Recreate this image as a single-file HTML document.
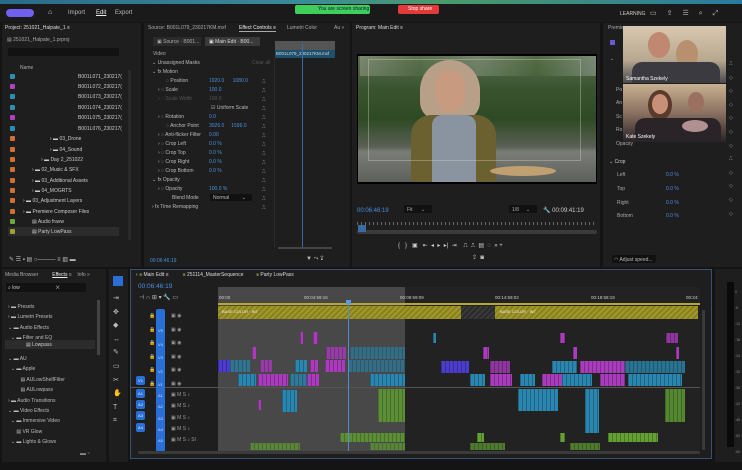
<!DOCTYPE html>
<html><head><meta charset="utf-8"><style>
*{margin:0;padding:0;box-sizing:border-box}
body{width:742px;height:470px;overflow:hidden;background:#141414;font-family:"Liberation Sans",sans-serif;font-size:5px;color:#aaa;position:relative}
.a{position:absolute}
.p{position:absolute;background:#1e1e1e}
.t{position:absolute;white-space:nowrap}
.blue{color:#4a8fe0}
.c{position:absolute;background-image:repeating-linear-gradient(90deg,rgba(0,0,0,.25) 0 1px,transparent 1px 4px)}
.v{background-color:#2a86ae}.m{background-color:#a83cba}.g{background-color:#62a034}.pu{background-color:#4c3ccc}
.hd{position:absolute;width:9px;height:9px;background:#2a6ed8;border-radius:2px;color:#cfe;font-size:4px;text-align:center;line-height:9px}
.sq{position:absolute;width:5px;height:5px;border-radius:1px}
</style></head><body>
<div class="a" style="left:0;top:0;width:742px;height:4px;background:linear-gradient(90deg,#2a6a8a,#3a8a9a 40%,#4a9a6a 60%,#2a7aa0)"></div>
<div class="a" style="left:0;top:4px;width:742px;height:18px;background:#1a1a1a"></div>
<div class="a" style="left:6px;top:9px;width:28px;height:8px;border-radius:4px;background:#7060f0"></div>
<div class="t" style="left:48px;top:9px;font-size:7px;color:#ddd">⌂</div>
<div class="t" style="left:68px;top:10px;font-size:6px;color:#bbb">Import</div>
<div class="t" style="left:96px;top:10px;font-size:6px;color:#eee;text-decoration:underline">Edit</div>
<div class="t" style="left:115px;top:10px;font-size:6px;color:#bbb">Export</div>
<div class="a" style="left:295px;top:5px;width:75px;height:9px;background:#3ecf5a;border-radius:2px"></div>
<div class="t" style="left:318px;top:6px;font-size:5px;color:#114">You are screen sharing</div>
<div class="a" style="left:398px;top:5px;width:41px;height:9px;background:#e03a3a;border-radius:2px"></div>
<div class="t" style="left:408px;top:6px;font-size:5px;color:#fff">Stop share</div>
<div class="t" style="left:620px;top:11px;font-size:5px;color:#ccc">LEARNING</div>
<div class="t" style="left:650px;top:9px;font-size:7px;color:#bbb;letter-spacing:10px">▭⇪☰⌕⤢</div>

<!-- project panel -->
<div class="p" style="left:2px;top:23px;width:139px;height:244px"></div>
<div class="t" style="left:5px;top:25px;color:#ddd">Project: 251021_Halpate_1 ≡</div>
<div class="t" style="left:7px;top:37px">▤ 251021_Halpate_1.prproj</div>
<div class="a" style="left:8px;top:48px;width:111px;height:8px;background:#121212"></div>
<div class="t" style="left:20px;top:65px">Name</div>
<div class="a" style="left:128px;top:70px;width:3px;height:170px;background:#2a2a2a"></div>
<div class="sq" style="left:10px;top:74px;background:#2a8fb0"></div><div class="t" style="left:78px;top:74px;color:#ccc">B001L071_230217(</div>
<div class="sq" style="left:10px;top:84px;background:#b040c0"></div><div class="t" style="left:78px;top:84px;color:#ccc">B001L072_230217(</div>
<div class="sq" style="left:10px;top:94px;background:#2a8fb0"></div><div class="t" style="left:78px;top:94px;color:#ccc">B001L073_230217(</div>
<div class="sq" style="left:10px;top:105px;background:#2a8fb0"></div><div class="t" style="left:78px;top:105px;color:#ccc">B001L074_230217(</div>
<div class="sq" style="left:10px;top:115px;background:#b040c0"></div><div class="t" style="left:78px;top:115px;color:#ccc">B001L075_230217(</div>
<div class="sq" style="left:10px;top:126px;background:#2a8fb0"></div><div class="t" style="left:78px;top:126px;color:#ccc">B001L076_230217(</div>
<div class="sq" style="left:10px;top:136px;background:#d07030"></div><div class="t" style="left:50px;top:136px;color:#ccc">› ▬ 03_Drone</div>
<div class="sq" style="left:10px;top:147px;background:#d07030"></div><div class="t" style="left:50px;top:147px;color:#ccc">› ▬ 04_Sound</div>
<div class="sq" style="left:10px;top:157px;background:#d07030"></div><div class="t" style="left:41px;top:157px;color:#ccc">› ▬ Day 2_251022</div>
<div class="sq" style="left:10px;top:167px;background:#d07030"></div><div class="t" style="left:32px;top:167px;color:#ccc">› ▬ 02_Music &amp; SFX</div>
<div class="sq" style="left:10px;top:178px;background:#d07030"></div><div class="t" style="left:32px;top:178px;color:#ccc">› ▬ 03_Additional Assets</div>
<div class="sq" style="left:10px;top:188px;background:#d07030"></div><div class="t" style="left:32px;top:188px;color:#ccc">› ▬ 04_MOGRTS</div>
<div class="sq" style="left:10px;top:198px;background:#d07030"></div><div class="t" style="left:23px;top:198px;color:#ccc">› ▬ 03_Adjustment Layers</div>
<div class="sq" style="left:10px;top:209px;background:#d07030"></div><div class="t" style="left:23px;top:209px;color:#ccc">› ▬ Premiere Composer Files</div>
<div class="sq" style="left:10px;top:219px;background:#6aa83a"></div><div class="t" style="left:32px;top:219px;color:#ccc">▤ Audio fravw</div>
<div class="a" style="left:8px;top:227px;width:111px;height:9px;background:#2c2c2c"></div>
<div class="sq" style="left:10px;top:229px;background:#a0a030"></div><div class="t" style="left:32px;top:229px;color:#ccc">▤ Party LowPass</div>
<div class="t" style="left:9px;top:256px;color:#bbb;font-size:6px">✎ ☰ ▪ ▤ ○——— ≡ ▥ ▬</div>

<!-- effect controls -->
<div class="p" style="left:144px;top:23px;width:206px;height:244px"></div>
<div class="t" style="left:148px;top:25px">Source: B001L079_230217KM.mxf</div>
<div class="t" style="left:239px;top:25px;color:#eee;border-bottom:1px solid #aaa">Effect Controls ≡</div>
<div class="t" style="left:287px;top:25px">Lumetri Color</div>
<div class="t" style="left:334px;top:25px">Au »</div>
<div class="a" style="left:153px;top:37px;width:48px;height:9px;background:#2a2a2a"></div><div class="t" style="left:157px;top:39px">▣ Source · B001...</div>
<div class="a" style="left:205px;top:37px;width:55px;height:9px;background:#3a3a3a"></div><div class="t" style="left:209px;top:39px;color:#ddd">▣ Main Edit · B00...</div>
<div class="a" style="left:275px;top:41px;width:60px;height:17px;background:#555"></div>
<div class="a" style="left:275px;top:50px;width:60px;height:8px;background:#1f4f6a"></div>
<div class="t" style="left:276px;top:51px;color:#cde;font-size:4.5px">B001L079_230217KM.mxf</div>
<div class="a" style="left:302px;top:44px;width:1px;height:205px;background:#3a6aa0"></div>
<div class="a" style="left:274px;top:58px;width:1px;height:190px;background:#2a2a2a"></div>
<div class="t" style="left:153px;top:51px">Video</div>
<div class="t" style="left:152px;top:60px;color:#bbb">⌄ Unassigned Masks</div><div class="t" style="left:252px;top:60px;color:#555">Clear all</div>
<div class="t" style="left:152px;top:69px;color:#bbb">⌄ fx Motion</div>
<div class="t" style="left:166px;top:78px;color:#bbb">◌ Position</div><div class="t blue" style="left:209px;top:78px">1920.0 &nbsp;&nbsp;&nbsp;&nbsp; 1080.0</div>
<div class="t" style="left:158px;top:87px;color:#bbb">› ◌ Scale</div><div class="t blue" style="left:209px;top:87px">100.0</div>
<div class="t" style="left:158px;top:96px;color:#555">› ◌ Scale Width</div><div class="t" style="left:209px;top:96px;color:#555">100.0</div>
<div class="t" style="left:211px;top:105px;color:#bbb">☑ Uniform Scale</div>
<div class="t" style="left:158px;top:114px;color:#bbb">› ◌ Rotation</div><div class="t blue" style="left:209px;top:114px">0.0</div>
<div class="t" style="left:166px;top:123px;color:#bbb">◌ Anchor Point</div><div class="t blue" style="left:209px;top:123px">3026.0 &nbsp;&nbsp;&nbsp; 1596.0</div>
<div class="t" style="left:158px;top:132px;color:#bbb">› ◌ Anti-flicker Filter</div><div class="t blue" style="left:209px;top:132px">0.00</div>
<div class="t" style="left:158px;top:141px;color:#bbb">› ◌ Crop Left</div><div class="t blue" style="left:209px;top:141px">0.0 %</div>
<div class="t" style="left:158px;top:150px;color:#bbb">› ◌ Crop Top</div><div class="t blue" style="left:209px;top:150px">0.0 %</div>
<div class="t" style="left:158px;top:159px;color:#bbb">› ◌ Crop Right</div><div class="t blue" style="left:209px;top:159px">0.0 %</div>
<div class="t" style="left:158px;top:168px;color:#bbb">› ◌ Crop Bottom</div><div class="t blue" style="left:209px;top:168px">0.0 %</div>
<div class="t" style="left:152px;top:177px;color:#bbb">⌄ fx Opacity</div>
<div class="t" style="left:158px;top:186px;color:#bbb">› ◌ Opacity</div><div class="t blue" style="left:209px;top:186px">100.0 %</div>
<div class="t" style="left:172px;top:195px;color:#bbb">Blend Mode</div><div class="a" style="left:210px;top:194px;width:42px;height:7px;background:#111"></div><div class="t" style="left:213px;top:195px;color:#bbb">Normal &nbsp;&nbsp;&nbsp;&nbsp;&nbsp;&nbsp;&nbsp; ⌄</div>
<div class="t" style="left:152px;top:204px;color:#bbb">› fx Time Remapping</div>
<div class="t" style="left:262px;top:78px;color:#999;line-height:9px">⎍<br>⎍<br>⎍<br>⎍<br>⎍<br>⎍<br>⎍<br>⎍<br>⎍<br>⎍<br>⎍<br>⎍<br>⎍<br>⎍<br>⎍</div>
<div class="a" style="left:278px;top:247px;width:54px;height:2px;background:#444"></div>
<div class="t blue" style="left:150px;top:258px">00:06:46:19</div>
<div class="t" style="left:306px;top:256px;color:#bbb;font-size:6px">▼ ⤳ ⇪</div>

<!-- program -->
<div class="p" style="left:352px;top:23px;width:248px;height:244px"></div>
<div class="t" style="left:356px;top:25px;color:#ddd">Program: Main Edit ≡</div>
<div class="a" style="left:357px;top:54px;width:240px;height:130px;background:#000"></div>
<div class="a" style="left:358px;top:56px;width:238px;height:126px;background:linear-gradient(180deg,#5e6e50 0%,#3a5430 25%,#2e4a24 50%,#5a6054 72%,#7a7c78 76%,#5e605c 100%)"></div>
<div class="a" style="left:360px;top:56px;width:236px;height:20px;background:linear-gradient(90deg,#9aa090,#55704a,#8a9a88,#4a6a3a,#9aa8a0);opacity:.5"></div>
<div class="a" style="left:420px;top:60px;width:60px;height:60px;border-radius:50% 50% 30% 30%;background:#b8a088"></div>
<div class="a" style="left:435px;top:70px;width:30px;height:42px;border-radius:45%;background:#c89a80"></div>
<div class="a" style="left:411px;top:115px;width:85px;height:67px;border-radius:20px 20px 0 0;background:#6a6030"></div>
<div class="a" style="left:432px;top:115px;width:44px;height:67px;border-radius:10px 10px 0 0;background:#8a94a0"></div>
<div class="a" style="left:490px;top:166px;width:66px;height:10px;border-radius:50%;background:#c0a070"></div>
<div class="a" style="left:368px;top:59px;width:213px;height:102px;border:1px solid rgba(220,220,200,.35)"></div>
<div class="t blue" style="left:357px;top:208px;font-size:6px">00:06:46:19</div>
<div class="a" style="left:404px;top:205px;width:28px;height:8px;background:#111"></div><div class="t" style="left:407px;top:207px">Fit &nbsp;&nbsp;&nbsp;&nbsp; ⌄</div>
<div class="a" style="left:509px;top:205px;width:28px;height:8px;background:#111"></div><div class="t" style="left:512px;top:207px">1/8 &nbsp;&nbsp;&nbsp; ⌄</div>
<div class="t" style="left:543px;top:207px;color:#ccc;font-size:6px">🔧 00:09:41:19</div>
<div class="a" style="left:357px;top:222px;width:240px;height:3px;background:repeating-linear-gradient(90deg,#666 0 1px,transparent 1px 4px)"></div>
<div class="a" style="left:357px;top:230px;width:240px;height:4px;background:#3a3a3a;border-radius:2px"></div>
<div class="a" style="left:358px;top:225px;width:8px;height:7px;background:#3a6aa0"></div>
<div class="t" style="left:398px;top:242px;color:#ccc;font-size:6px">{ &nbsp; } &nbsp; ▣ &nbsp; ⇤ &nbsp;◂ &nbsp;▸ &nbsp;▸| &nbsp;⇥ &nbsp;&nbsp; ⎍ &nbsp;⎍ &nbsp;▤ &nbsp;◌ &nbsp;» +</div>
<div class="t" style="left:472px;top:254px;color:#ccc;font-size:6px">⇪ &nbsp;◙</div>

<!-- right panel -->
<div class="p" style="left:603px;top:23px;width:139px;height:244px"></div>
<div class="t" style="left:608px;top:25px">Premie</div>
<div class="a" style="left:610px;top:40px;width:5px;height:5px;background:#6a5ad0"></div>
<div class="t" style="left:610px;top:56px">⌄</div>
<div class="t" style="left:616px;top:87px">Po</div><div class="t" style="left:616px;top:100px">An</div><div class="t" style="left:616px;top:114px">Sc</div><div class="t" style="left:616px;top:127px">Ro</div><div class="t" style="left:616px;top:141px">Opacity</div>
<div class="t" style="left:609px;top:159px;color:#ccc">⌄ Crop</div>
<div class="t" style="left:617px;top:172px">Left</div><div class="t blue" style="left:666px;top:172px">0.0 %</div>
<div class="t" style="left:617px;top:186px">Top</div><div class="t blue" style="left:666px;top:186px">0.0 %</div>
<div class="t" style="left:617px;top:200px">Right</div><div class="t blue" style="left:666px;top:200px">0.0 %</div>
<div class="t" style="left:617px;top:213px">Bottom</div><div class="t blue" style="left:666px;top:213px">0.0 %</div>
<div class="t" style="left:729px;top:58px;line-height:13.6px;color:#999">⎍<br>◇<br>◇<br>◇<br>◇<br>◇<br>◇<br>⎍<br>◇<br>◇<br>◇<br>◇</div>
<div class="a" style="left:612px;top:255px;width:44px;height:8px;background:#111;border-radius:2px"></div><div class="t" style="left:614px;top:257px;color:#bbb">◠ Adjust speed...</div>
<div class="a" style="left:623px;top:26px;width:103px;height:57px;background:linear-gradient(180deg,#d8c8b0,#b8a890 60%,#4a4a50)"></div>
<div class="a" style="left:648px;top:32px;width:22px;height:26px;border-radius:50%;background:#c08870"></div>
<div class="a" style="left:676px;top:40px;width:22px;height:28px;border-radius:50%;background:#b89070"></div>
<div class="a" style="left:632px;top:62px;width:88px;height:21px;border-radius:10px 10px 0 0;background:#3a3a40"></div>
<div class="t" style="left:626px;top:76px;color:#fff;font-size:5px">Samantha Szekely</div>
<div class="a" style="left:623px;top:84px;width:103px;height:58px;background:linear-gradient(180deg,#c8b090,#8a7060 50%,#2a2228)"></div>
<div class="a" style="left:648px;top:90px;width:24px;height:30px;border-radius:50%;background:#5a3a2a"></div>
<div class="a" style="left:652px;top:94px;width:16px;height:20px;border-radius:50%;background:#c89078"></div>
<div class="a" style="left:688px;top:92px;width:16px;height:20px;border-radius:50%;background:#9a7060"></div>
<div class="a" style="left:635px;top:118px;width:86px;height:24px;border-radius:10px 10px 0 0;background:#2a2428"></div>
<div class="a" style="left:682px;top:120px;width:26px;height:12px;border-radius:50%;background:#b09090"></div>
<div class="t" style="left:626px;top:134px;color:#fff;font-size:5px">Kate Szekely</div>

<!-- effects panel -->
<div class="p" style="left:2px;top:269px;width:104px;height:193px"></div>
<div class="t" style="left:5px;top:272px">Media Browser &nbsp;&nbsp;&nbsp;&nbsp;&nbsp;&nbsp;&nbsp;&nbsp; <span style="color:#eee;text-decoration:underline">Effects</span> ≡ &nbsp;&nbsp; Info »</div>
<div class="a" style="left:6px;top:283px;width:80px;height:9px;background:#121212"></div>
<div class="t" style="left:8px;top:285px;color:#ccc">⌕ low &nbsp;&nbsp;&nbsp;&nbsp;&nbsp;&nbsp;&nbsp;&nbsp;&nbsp;&nbsp;&nbsp;&nbsp;&nbsp;&nbsp;&nbsp;&nbsp;&nbsp;&nbsp;&nbsp;&nbsp;&nbsp;&nbsp;&nbsp;&nbsp; ✕</div>
<div class="a" style="left:97px;top:300px;width:3px;height:55px;background:#444"></div>
<div class="t" style="left:8px;top:302px;color:#bbb;line-height:10.4px">› ▬ Presets<br>› ▬ Lumetri Presets<br>⌄ ▬ Audio Effects<br>&nbsp;&nbsp;⌄ ▬ Filter and EQ<br><br>⌄ ▬ AU<br>&nbsp;&nbsp;⌄ ▬ Apple<br>&nbsp;&nbsp;&nbsp;&nbsp;&nbsp;&nbsp;&nbsp;&nbsp;&nbsp;▤ AULowShelfFilter<br>&nbsp;&nbsp;&nbsp;&nbsp;&nbsp;&nbsp;&nbsp;&nbsp;&nbsp;▤ AULowpass<br>› ▬ Audio Transitions<br>⌄ ▬ Video Effects<br>&nbsp;&nbsp;⌄ ▬ Immersive Video<br>&nbsp;&nbsp;&nbsp;&nbsp;&nbsp;&nbsp;▤ VR Glow<br>&nbsp;&nbsp;⌄ ▬ Lights &amp; Glows</div>
<div class="a" style="left:5px;top:340px;width:90px;height:9px;background:#2c2c2c"></div>
<div class="t" style="left:26px;top:342px;color:#ccc">▤ Lowpass</div>
<div class="t" style="left:80px;top:451px;color:#888;font-size:6px">▬ ▫</div>

<!-- tools -->
<div class="p" style="left:109px;top:269px;width:19px;height:193px"></div>
<div class="a" style="left:113px;top:276px;width:10px;height:10px;background:#2a6ed8"></div>
<div class="t" style="left:113px;top:292px;color:#bbb;font-size:7px;line-height:13.6px">⇥<br>✥<br>◆<br>↔<br>✎<br>▭<br>✂<br>✋<br>T<br>⌗</div>

<!-- timeline -->
<div class="p" style="left:130px;top:269px;width:582px;height:190px;border:1px solid #3a5070"></div>
<div class="t" style="left:136px;top:272px;color:#ddd">‹ <span style="color:#6a7a3a">■</span> Main Edit ≡ &nbsp;&nbsp;&nbsp;&nbsp;&nbsp;&nbsp;&nbsp;&nbsp; <span style="color:#6a7a3a">■</span> 251114_MasterSequence &nbsp;&nbsp;&nbsp;&nbsp;&nbsp;&nbsp;&nbsp; <span style="color:#6a7a3a">■</span> Party LowPass</div>
<div class="t blue" style="left:138px;top:283px;font-size:6.5px">00:06:46:19</div>
<div class="t" style="left:139px;top:294px;color:#bbb;font-size:6px">⊣ ∩ ⊞ ▾ 🔧 ▭</div>
<div class="a" style="left:218px;top:287px;width:187px;height:165px;background:#484848"></div>
<div class="a" style="left:405px;top:287px;width:295px;height:165px;background:#222"></div>
<div class="a" style="left:218px;top:303px;width:482px;height:2px;background:#b8a830"></div>
<div class="t" style="left:219px;top:295px;color:#ccc;font-size:4.5px">00:00</div>
<div class="t" style="left:304px;top:295px;color:#ccc;font-size:4.5px">00:04:59:16</div>
<div class="t" style="left:400px;top:295px;color:#ccc;font-size:4.5px">00:09:59:09</div>
<div class="t" style="left:495px;top:295px;color:#ccc;font-size:4.5px">00:14:59:02</div>
<div class="t" style="left:591px;top:295px;color:#ccc;font-size:4.5px">00:19:58:19</div>
<div class="t" style="left:686px;top:295px;color:#ccc;font-size:4.5px">00:24:</div>
<div class="a" style="left:218px;top:306px;width:243px;height:13px;background:repeating-linear-gradient(135deg,#8a8020 0 2px,#a09828 2px 4px)"></div>
<div class="a" style="left:461px;top:306px;width:34px;height:13px;background:repeating-linear-gradient(135deg,#2a2a2a 0 2px,#3a3a3a 2px 4px)"></div>
<div class="a" style="left:495px;top:306px;width:203px;height:13px;background:repeating-linear-gradient(135deg,#8a8020 0 2px,#a09828 2px 4px)"></div>
<div class="t" style="left:222px;top:309px;color:#eee;font-size:4px">BASE COLOR · INT</div>
<div class="t" style="left:500px;top:309px;color:#eee;font-size:4px">BASE COLOR · INT</div>
<div class="a" style="left:130px;top:387px;width:570px;height:1px;background:#555"></div>
<div class="a" style="left:156px;top:309px;width:9px;height:143px;background:#2a6ed8;border-radius:2px"></div>
<div class="t" style="left:158px;top:324px;color:#cde;font-size:4px;line-height:13.5px">V5<br>V4<br>V3<br>V2<br>V1</div>
<div class="t" style="left:158px;top:390px;color:#cde;font-size:4px;line-height:11.3px">A1<br>A2<br>A3<br>A4<br>A5</div>
<div class="hd" style="left:136px;top:376px">V1</div>
<div class="hd" style="left:136px;top:389px">A1</div><div class="hd" style="left:136px;top:400px">A2</div><div class="hd" style="left:136px;top:411px">A3</div><div class="hd" style="left:136px;top:423px">A4</div>
<div class="t" style="left:149px;top:310px;color:#bbb;font-size:5px;line-height:13.5px">🔒<br>🔒<br>🔒<br>🔒<br>🔒<br>🔒</div>
<div class="t" style="left:171px;top:310px;color:#999;font-size:5px;line-height:13.5px">▣ ◉<br>▣ ◉<br>▣ ◉<br>▣ ◉<br>▣ ◉<br>▣ ◉</div>
<div class="t" style="left:171px;top:390px;color:#999;font-size:5px;line-height:11.3px">▣ M S ♪<br>▣ M S ♪<br>▣ M S ♪<br>▣ M S ♪<br>▣ M S ♪ Sl</div>
<div class="c m" style="left:300px;top:332px;width:3px;height:12px"></div>
<div class="c m" style="left:313px;top:332px;width:5px;height:12px"></div>
<div class="c v" style="left:433px;top:333px;width:3px;height:10px"></div>
<div class="c m" style="left:560px;top:333px;width:5px;height:10px"></div>
<div class="c m" style="left:666px;top:333px;width:12px;height:10px;opacity:.8"></div>
<div class="c m" style="left:252px;top:347px;width:4px;height:12px"></div>
<div class="c m" style="left:326px;top:347px;width:20px;height:12px;opacity:.8"></div>
<div class="c v" style="left:350px;top:347px;width:55px;height:12px;opacity:.6"></div>
<div class="c m" style="left:483px;top:347px;width:6px;height:12px"></div>
<div class="c m" style="left:573px;top:347px;width:4px;height:12px"></div>
<div class="c m" style="left:676px;top:347px;width:3px;height:12px"></div>
<div class="c pu" style="left:218px;top:360px;width:12px;height:12px"></div>
<div class="c v" style="left:230px;top:360px;width:20px;height:12px;opacity:.7"></div>
<div class="c m" style="left:260px;top:360px;width:12px;height:12px;opacity:.8"></div>
<div class="c v" style="left:295px;top:360px;width:12px;height:12px"></div>
<div class="c m" style="left:310px;top:360px;width:8px;height:12px"></div>
<div class="c m" style="left:325px;top:360px;width:20px;height:12px"></div>
<div class="c v" style="left:348px;top:360px;width:57px;height:12px;opacity:.6"></div>
<div class="c pu" style="left:441px;top:361px;width:28px;height:12px"></div>
<div class="c m" style="left:490px;top:361px;width:20px;height:12px;opacity:.8"></div>
<div class="c v" style="left:552px;top:361px;width:25px;height:12px"></div>
<div class="c m" style="left:580px;top:361px;width:45px;height:12px"></div>
<div class="c v" style="left:625px;top:361px;width:60px;height:12px;opacity:.8"></div>
<div class="c v" style="left:238px;top:374px;width:18px;height:12px"></div>
<div class="c m" style="left:258px;top:374px;width:30px;height:12px"></div>
<div class="c v" style="left:290px;top:374px;width:20px;height:12px;opacity:.8"></div>
<div class="c m" style="left:307px;top:374px;width:12px;height:12px"></div>
<div class="c v" style="left:370px;top:374px;width:35px;height:12px"></div>
<div class="c v" style="left:470px;top:374px;width:15px;height:12px"></div>
<div class="c m" style="left:490px;top:374px;width:22px;height:12px"></div>
<div class="c v" style="left:520px;top:374px;width:15px;height:12px"></div>
<div class="c m" style="left:542px;top:374px;width:20px;height:12px"></div>
<div class="c v" style="left:562px;top:374px;width:30px;height:12px"></div>
<div class="c m" style="left:600px;top:374px;width:25px;height:12px"></div>
<div class="c v" style="left:628px;top:374px;width:54px;height:12px"></div>
<div class="c v" style="left:282px;top:390px;width:15px;height:22px"></div>
<div class="c v" style="left:518px;top:389px;width:40px;height:22px"></div>
<div class="c v" style="left:585px;top:389px;width:14px;height:44px"></div>
<div class="c m" style="left:258px;top:400px;width:3px;height:10px"></div>
<div class="c g" style="left:378px;top:389px;width:27px;height:33px;opacity:.8"></div>
<div class="c g" style="left:665px;top:389px;width:20px;height:33px;opacity:.8"></div>
<div class="c g" style="left:340px;top:433px;width:65px;height:9px;opacity:.8"></div>
<div class="c g" style="left:477px;top:433px;width:7px;height:9px"></div>
<div class="c g" style="left:560px;top:433px;width:5px;height:9px"></div>
<div class="c g" style="left:608px;top:433px;width:50px;height:9px"></div>
<div class="c g" style="left:250px;top:443px;width:50px;height:7px;opacity:.7"></div>
<div class="c g" style="left:370px;top:443px;width:35px;height:7px;opacity:.7"></div>
<div class="c g" style="left:470px;top:443px;width:35px;height:7px;opacity:.7"></div>
<div class="c g" style="left:570px;top:443px;width:30px;height:7px;opacity:.7"></div>
<div class="a" style="left:348px;top:300px;width:1px;height:152px;background:#5a8ac8"></div>
<div class="a" style="left:346px;top:300px;width:5px;height:4px;background:#5a9ae0"></div>
<div class="a" style="left:138px;top:451px;width:562px;height:3px;background:#3a3a3a;border-radius:2px"></div>
<div class="a" style="left:702px;top:310px;width:3px;height:140px;background:#3a3a3a"></div>
<!-- meter -->
<div class="p" style="left:715px;top:269px;width:27px;height:193px"></div>
<div class="a" style="left:727px;top:282px;width:7px;height:165px;background:#0a0a0a"></div>
<div class="t" style="left:735px;top:284px;color:#888;font-size:3.5px;line-height:16px">0<br>-6<br>-12<br>-18<br>-24<br>-30<br>-36<br>-42<br>-48<br>-54<br>-60</div>
</body></html>
